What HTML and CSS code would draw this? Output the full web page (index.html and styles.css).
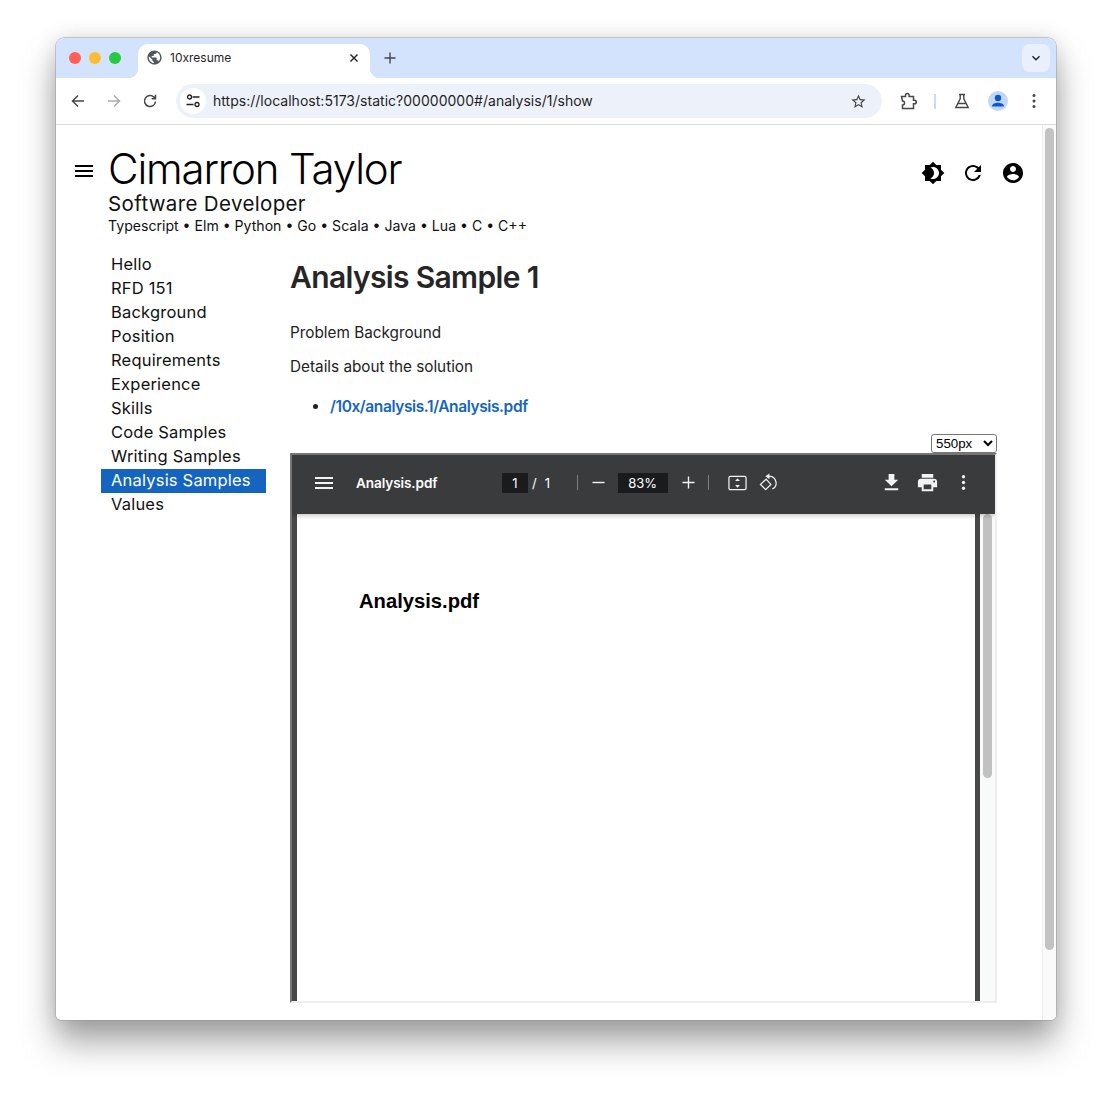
FILE: index.html
```html
<!DOCTYPE html>
<html lang="en">
<head>
<meta charset="utf-8">
<title>10xresume</title>
<link rel="stylesheet" href="styles.css">
</head>
<body>
<div class="window">
  <div class="tabstrip">
    <div class="lights"><i class="light red"></i><i class="light yellow"></i><i class="light green"></i></div>
    <div class="tab">
      <svg class="favicon" viewBox="0 0 24 24"><path d="M12 2C6.48 2 2 6.48 2 12s4.48 10 10 10 10-4.48 10-10S17.52 2 12 2zm-1 17.93c-3.95-.49-7-3.85-7-7.93 0-.62.08-1.21.21-1.79L9 15v1c0 1.1.9 2 2 2v1.93zm6.9-2.54c-.26-.81-1-1.39-1.9-1.39h-1v-3c0-.55-.45-1-1-1H8v-2h2c.55 0 1-.45 1-1V7h2c1.1 0 2-.9 2-2v-.41c2.93 1.19 5 4.06 5 7.41 0 2.08-.8 3.97-2.1 5.39z"/></svg>
      <span class="tab-title">10xresume</span>
      <svg class="tab-close" viewBox="0 0 10 10"><path d="M1.5 1.5l7 7M8.500 1.500l-7 7"/></svg>
    </div>
    <svg class="new-tab" viewBox="0 0 12 12"><path d="M6 .5v11M.5 6h11"/></svg>
    <div class="tab-search"><svg viewBox="0 0 10 10"><path d="M1.500 3.200L5 6.700l3.500-3.500"/></svg></div>
  </div>
  <div class="toolbar">
    <svg class="nav" viewBox="0 0 16 16"><path d="M14 8H2.500M8 2.500L2.500 8 8 13.500"/></svg>
    <svg class="nav dim" viewBox="0 0 16 16"><path d="M2 8h11.500M8 2.500L13.500 8 8 13.500"/></svg>
    <svg class="nav" viewBox="0 0 16 16"><path d="M13.500 8.500a5.500 5.500 0 1 1-1.600-4.400l1.600 1.600M13.500 1.800v3.900H9.600"/></svg>
    <div class="omnibox">
      <div class="site-chip"><svg viewBox="0 0 16 16"><circle cx="4.500" cy="4" r="2"/><path d="M7.500 4h7M1.500 11.500h7"/><circle cx="12" cy="11.500" r="2"/></svg></div>
      <span class="url">https://localhost:5173/static?00000000#/analysis/1/show</span>
      <svg class="star" viewBox="0 0 24 24"><path d="M22 9.240l-7.190-.62L12 2 9.190 8.630 2 9.240l5.460 4.730L5.820 21 12 17.270 18.180 21l-1.630-7.030L22 9.240zM12 15.400l-3.760 2.270 1-4.280-3.320-2.880 4.380-.38L12 6.100l1.710 4.040 4.380.38-3.320 2.880 1 4.280L12 15.400z"/></svg>
    </div>
    <svg class="extension" viewBox="0 0 18 18"><path d="M1.500 4.500h4V3.200a1.800 1.800 0 0 1 3.600 0v1.300h4.400v3.700h1a1.800 1.800 0 0 1 0 3.600h-1v4.700H2.500v-3.600a2 2 0 0 0 0-4z"/></svg>
    <i class="tool-sep"></i>
    <svg class="flask" viewBox="0 0 16 16"><path d="M5 1.500h6M6.200 1.500v4.300L1.800 14.500h12.400L9.800 5.800V1.500M4 10.500h8"/></svg>
    <div class="avatar"><svg viewBox="0 0 20 20"><circle cx="10" cy="7" r="3.200"/><path d="M4 15.500c0-2.800 3.500-3.800 6-3.800s6 1 6 3.800z"/></svg></div>
    <svg class="kebab" viewBox="0 0 4 16"><circle cx="2" cy="2.500" r="1.500"/><circle cx="2" cy="8" r="1.500"/><circle cx="2" cy="13.500" r="1.500"/></svg>
  </div>
  <div class="viewport">
    <div class="page">
      <header class="resume-head">
        <svg class="head-menu" viewBox="0 0 24 24"><path d="M3 18h18v-2H3v2zm0-5h18v-2H3v2zm0-7v2h18V6H3z"/></svg>
        <div class="identity">
          <div class="name">Cimarron Taylor</div>
          <div class="role">Software Developer</div>
          <div class="langs">Typescript • Elm • Python • Go • Scala • Java • Lua • C • C++</div>
        </div>
        <div class="head-actions">
          <svg viewBox="0 0 24 24"><path d="M20 8.690V4h-4.690L12 .69 8.690 4H4v4.690L.69 12 4 15.310V20h4.690L12 23.310 15.310 20H20v-4.690L23.310 12 20 8.690zM12 18c-.89 0-1.740-.2-2.500-.55C11.560 16.500 13 14.420 13 12s-1.440-4.500-3.500-5.450C10.260 6.200 11.110 6 12 6c3.310 0 6 2.690 6 6s-2.690 6-6 6z"/></svg>
          <svg viewBox="0 0 24 24"><path d="M17.650 6.350C16.200 4.900 14.210 4 12 4c-4.420 0-7.990 3.580-7.990 8s3.570 8 7.990 8c3.730 0 6.840-2.550 7.730-6h-2.080c-.82 2.330-3.040 4-5.650 4-3.310 0-6-2.690-6-6s2.690-6 6-6c1.660 0 3.140.69 4.220 1.780L13 11h7V4l-2.350 2.350z"/></svg>
          <svg viewBox="0 0 24 24"><path d="M12 2C6.480 2 2 6.480 2 12s4.480 10 10 10 10-4.480 10-10S17.520 2 12 2zm0 3c1.660 0 3 1.340 3 3s-1.340 3-3 3-3-1.340-3-3 1.340-3 3-3zm0 14.200c-2.500 0-4.710-1.280-6-3.220.03-1.990 4-3.080 6-3.080 1.990 0 5.970 1.090 6 3.080-1.290 1.940-3.500 3.220-6 3.220z"/></svg>
        </div>
      </header>
      <div class="columns">
        <nav class="sidebar">
          <a class="nav-item">Hello</a>
          <a class="nav-item">RFD 151</a>
          <a class="nav-item">Background</a>
          <a class="nav-item">Position</a>
          <a class="nav-item">Requirements</a>
          <a class="nav-item">Experience</a>
          <a class="nav-item">Skills</a>
          <a class="nav-item">Code Samples</a>
          <a class="nav-item">Writing Samples</a>
          <a class="nav-item active">Analysis Samples</a>
          <a class="nav-item">Values</a>
        </nav>
        <main class="article">
          <h1 class="title">Analysis Sample 1</h1>
          <p class="para first">Problem Background</p>
          <p class="para">Details about the solution</p>
          <ul class="links"><li><a class="pdf-link">/10x/analysis.1/Analysis.pdf</a></li></ul>
          <div class="size-row">
            <select class="size-select"><option>550px</option></select>
          </div>
          <div class="pdf-frame">
            <div class="pdf-toolbar">
              <div class="pdf-left">
                <svg class="pdf-icon" viewBox="0 0 24 24"><path d="M3 18h18v-2H3v2zm0-5h18v-2H3v2zm0-7v2h18V6H3z"/></svg>
                <span class="pdf-name">Analysis.pdf</span>
              </div>
              <div class="pdf-center">
                <span class="pdf-field page-field">1</span>
                <span class="pdf-slash">/</span>
                <span class="pdf-count">1</span>
                <i class="pdf-sep sep-a"></i>
                <svg class="pdf-glyph" viewBox="0 0 14 14"><path d="M.5 7h13"/></svg>
                <span class="pdf-field zoom-field">83%</span>
                <svg class="pdf-glyph" viewBox="0 0 14 14"><path d="M.5 7h13M7 .5v13"/></svg>
                <i class="pdf-sep sep-b"></i>
                <svg class="pdf-fit" viewBox="0 0 20 16"><rect x="1" y="1" width="18" height="14" rx="1.500"/><path class="solid" d="M10 3l2.500 3h-5zM10 13l-2.500-3h5z"/></svg>
                <svg class="pdf-rotate" viewBox="0 0 20 20"><path d="M7.500 6.500L1.500 12l5.500 5.500 5.500-5.500zM8.500 3.500h2.500a7 7 0 0 1 3 13.300"/><path class="solid" d="M11 .5L6.800 3.500 11 6.500z"/></svg>
              </div>
              <div class="pdf-right">
                <svg class="pdf-icon" viewBox="0 0 24 24"><path d="M19 9h-4V3H9v6H5l7 7 7-7zM5 18v2h14v-2H5z"/></svg>
                <svg class="pdf-icon print" viewBox="0 0 24 24"><path d="M19 8H5c-1.660 0-3 1.340-3 3v6h4v4h12v-4h4v-6c0-1.660-1.340-3-3-3zm-3 11H8v-5h8v5zm3-7c-.55 0-1-.45-1-1s.45-1 1-1 1 .45 1 1-.45 1-1 1zm-1-9H6v4h12V3z"/></svg>
                <svg class="pdf-icon more" viewBox="0 0 24 24"><circle cx="12" cy="6" r="1.700"/><circle cx="12" cy="12" r="1.700"/><circle cx="12" cy="18" r="1.700"/></svg>
              </div>
            </div>
            <div class="pdf-body">
              <div class="pdf-page"><div class="doc-title">Analysis.pdf</div></div>
              <div class="pdf-scroll"><i class="pdf-thumb"></i></div>
            </div>
          </div>
        </main>
      </div>
    </div>
    <div class="scrollbar"><i class="thumb"></i></div>
  </div>
</div>
</body>
</html>
```
FILE: styles.css
```css
* { box-sizing: border-box; }
html, body { margin: 0; height: 100%; overflow: hidden; background: #fff; }
body { padding: 38px 56px 74px; font-family: "Inter", "Liberation Sans", sans-serif; }
svg { display: block; flex: none; }

.window {
  height: 982px; display: flex; flex-direction: column; overflow: hidden;
  border-radius: 8px 8px 5px 5px; background: #fff;
  box-shadow: 0 0 0 .5px #9a9a9a, 0 22px 34px rgba(0,0,0,.36), 0 0 22px rgba(0,0,0,.12);
}
.tabstrip { height: 40px; flex: none; background: #d3e3fd; display: flex; align-items: flex-end; position: relative; }
.lights { display: flex; gap: 8px; margin: 0 17px 14px 13px; align-self: flex-end; }
.light { width: 12px; height: 12px; border-radius: 50%; display: block; }
.red { background: #ff5f57; } .yellow { background: #febc2e; } .green { background: #28c840; }
.tab {
  width: 232px; height: 34px; background: #fff; border-radius: 10px 10px 0 0;
  display: flex; align-items: center; padding: 0 11px 7px 8px; position: relative; z-index: 1;
}
.tab::before, .tab::after { content: ""; position: absolute; bottom: 0; width: 10px; height: 10px; }
.tab::before { left: -10px; background: radial-gradient(circle at 0 0, #d3e3fd 10px, #fff 10.500px); }
.tab::after { right: -10px; background: radial-gradient(circle at 100% 0, #d3e3fd 10px, #fff 10.500px); }
.favicon { width: 17px; height: 17px; fill: #50565c; }
.tab-title { font-size: 12px; color: #1f1f1f; margin-left: 7px; flex: 1; }
.tab-close { width: 10px; height: 10px; fill: none; stroke: #1f1f1f; stroke-width: 1.400; }
.new-tab { width: 12px; height: 12px; fill: none; stroke: #444746; stroke-width: 1.400; margin: 0 0 14px 14px; }
.tab-search { width: 28px; height: 28px; border-radius: 8px; background: #e9f0fc; position: absolute; right: 6px; top: 6px; display: flex; align-items: center; justify-content: center; }
.tab-search svg { width: 10px; height: 10px; fill: none; stroke: #1f1f1f; stroke-width: 1.400; }

.toolbar {
  height: 47px; flex: none; background: #fff; border-bottom: 1px solid #dadce0;
  display: flex; align-items: center; padding: 0 15px 0 14px; position: relative;
}
.nav { width: 16px; height: 16px; fill: none; stroke: #444746; stroke-width: 1.500; margin-right: 20px; }
.nav.dim { stroke: #a8abad; }
.nav:nth-child(3) { margin-right: 19px; }
.omnibox {
  width: 706px; height: 34px; border-radius: 17px; background: #edf2fa;
  display: flex; align-items: center; padding: 0 15px 0 4px; margin-left: -1px;
}
.site-chip { width: 26px; height: 26px; border-radius: 50%; background: #fff; display: flex; align-items: center; justify-content: center; }
.site-chip svg { width: 16px; height: 16px; fill: none; stroke: #1f1f1f; stroke-width: 1.300; }
.url { font-size: 14px; line-height: 16px; padding-bottom: 1px; letter-spacing: .02px; color: #1f1f1f; margin-left: 7px; flex: 1; }
.star { width: 17px; height: 17px; fill: #444746; }
.extension { width: 18px; height: 18px; fill: none; stroke: #444746; stroke-width: 1.500; margin-left: 18px; }
.tool-sep { width: 1.500px; height: 15px; background: #c7dafa; margin: 0 18px 0 16px; display: block; }
.flask { width: 16px; height: 16px; fill: none; stroke: #444746; stroke-width: 1.400; }
.avatar { width: 20px; height: 20px; border-radius: 50%; background: #c2d7f8; margin-left: 18px; }
.avatar svg { width: 20px; height: 20px; fill: #0b57d0; }
.kebab { width: 4px; height: 16px; fill: #444746; margin-left: 24px; }

.viewport { flex: 1; min-height: 0; display: flex; }
.page { flex: 1; min-width: 0; padding: 21px 0 0 16px; display: flex; flex-direction: column; }
.scrollbar { width: 14px; flex: none; background: #fafafa; border-left: 1px solid #ececec; padding: 3px 2px 0 2px; }
.thumb { display: block; width: 9px; height: 822px; border-radius: 5px; background: #c2c2c2; }

.resume-head { display: flex; align-items: flex-start; height: 106px; flex: none; }
.head-menu { width: 24px; height: 24px; margin-top: 13px; fill: #000; }
.identity { margin-left: 12px; flex: 1; }
.name { font-size: 42px; font-weight: 300; line-height: 46px; letter-spacing: -1.150px; color: #000; }
.role { font-size: 20.500px; line-height: 24px; color: #111; letter-spacing: .35px; font-weight: 400; }
.langs { font-size: 14.100px; line-height: 20px; color: #111; }
.head-actions { display: flex; gap: 16px; margin: 15px 17px 0 0; }
.head-actions svg { width: 24px; height: 24px; fill: #000; }

.columns { display: flex; flex: 1; min-height: 0; }
.sidebar { width: 218px; padding: 1px 0 0 29px; flex: none; }
.nav-item { display: block; width: 165px; height: 24px; line-height: 22px; padding-left: 10px; font-size: 16.500px; letter-spacing: .2px; color: #111; }
.nav-item.active { background: #1565c0; color: #fff; }
.article { width: 707px; flex: none; min-height: 0; padding-top: 1px; color: #222; }
.title { margin: 0 0 2px; font-size: 30px; line-height: 48px; font-weight: 600; letter-spacing: -.65px; color: #262626; }
.para { margin: 0; font-size: 15.300px; line-height: 24px; color: #222; }
.para.first { margin-top: 20px; margin-bottom: 10px; }
.links { margin: 16px 0 0; padding: 0 0 0 40px; font-size: 15.500px; line-height: 24px; }
.pdf-link { color: #1565c0; font-weight: 600; letter-spacing: -.4px; }
.size-row { display: flex; justify-content: flex-end; margin-top: 15px; height: 19px; }
.size-select { width: 66px; height: 19px; font: 13.300px "Liberation Sans", sans-serif; background: #fff; color: #000; border: 1px solid #767676; border-radius: 3px; }

.pdf-frame { height: 550px; display: flex; flex-direction: column; overflow: hidden; border: 2px solid; border-color: #767676 #eeeeee #eeeeee #767676; }
.pdf-toolbar { height: 59px; padding-bottom: 4px; flex: none; background: #3a3b3d; display: flex; align-items: center; color: #fff; position: relative; box-shadow: 0 2px 4px rgba(0,0,0,.2); z-index: 1; }
.pdf-left { display: flex; align-items: center; width: 210px; padding-left: 20px; }
.pdf-icon { width: 24px; height: 24px; fill: #f1f3f4; }
.pdf-name { font-size: 13.600px; font-weight: 600; margin-left: 20px; letter-spacing: -.1px; }
.pdf-center { display: flex; align-items: center; font-size: 13px; }
.pdf-field { height: 20px; background: #191b1c; display: flex; align-items: center; justify-content: center; font-size: 13px; }
.page-field { width: 26px; }
.pdf-slash { margin: 0 8px 0 4px; }
.pdf-count { width: 8px; }
.pdf-sep { width: 1px; height: 15px; background: #7d7f80; display: block; }
.sep-a { margin: 0 14px 0 24px; }
.sep-b { margin: 0 19px 0 13px; }
.pdf-glyph { width: 13px; height: 13px; fill: none; stroke: #f1f3f4; stroke-width: 1.500; }
.zoom-field { width: 50px; margin: 0 14px 0 13px; }
.pdf-fit { width: 19px; height: 16px; fill: none; stroke: #f1f3f4; stroke-width: 1.300; }
.pdf-rotate { width: 19px; height: 19px; fill: none; stroke: #f1f3f4; stroke-width: 1.300; margin-left: 12px; }
.solid { fill: #f1f3f4; stroke: none; }
.pdf-right { display: flex; align-items: center; gap: 13px; margin-left: auto; padding-right: 20px; }
.pdf-right .pdf-icon { width: 23px; height: 23px; }
.pdf-body { flex: 1; min-height: 0; display: flex; background: #484848; padding: 0 0 0 5px; }
.pdf-page { width: 678px; background: #fff; padding: 75px 0 0 62px; }
.doc-title { font: bold 20.200px/24px "Liberation Sans", sans-serif; color: #000; }
.pdf-scroll { width: 15px; margin-left: 5px; flex: none; background: #f9fafa; padding-left: 3px; }
.pdf-thumb { display: block; width: 9px; height: 264px; background: #c1c1c1; border-radius: 5px; }
```
